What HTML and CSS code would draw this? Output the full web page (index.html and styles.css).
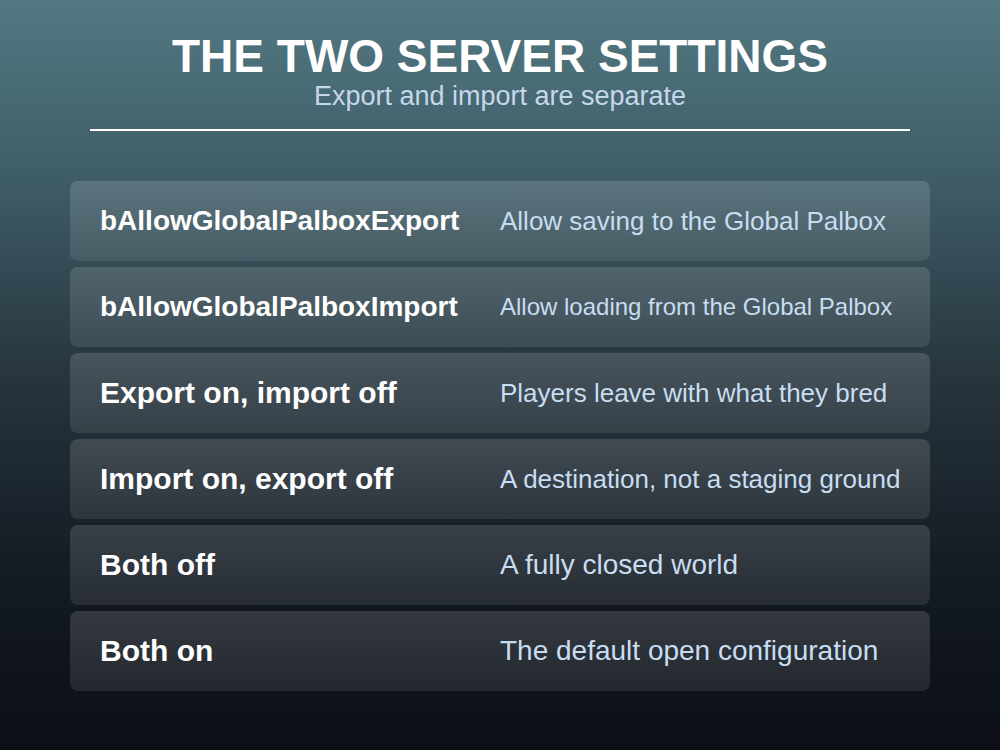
FILE: index.html
```html
<!DOCTYPE html>
<html lang="en">
<head>
<meta charset="utf-8">
<title>The Two Server Settings</title>
<link rel="stylesheet" href="styles.css">
</head>
<body>
<main class="slide">
  <header class="head">
    <h1 class="title">THE TWO SERVER SETTINGS</h1>
    <p class="subtitle">Export and import are separate</p>
    <hr class="rule">
  </header>
  <section class="rows">
    <div class="row"><span class="key k28">bAllowGlobalPalboxExport</span><span class="val v26">Allow saving to the Global Palbox</span></div>
    <div class="row"><span class="key k28">bAllowGlobalPalboxImport</span><span class="val v24">Allow loading from the Global Palbox</span></div>
    <div class="row"><span class="key">Export on, import off</span><span class="val v26">Players leave with what they bred</span></div>
    <div class="row"><span class="key">Import on, export off</span><span class="val v26">A destination, not a staging ground</span></div>
    <div class="row"><span class="key">Both off</span><span class="val">A fully closed world</span></div>
    <div class="row"><span class="key">Both on</span><span class="val">The default open configuration</span></div>
  </section>
</main>
</body>
</html>
```

FILE: styles.css
```css
html, body {
  margin: 0;
  padding: 0;
}
body {
  width: 1000px;
  height: 750px;
  overflow: hidden;
  font-family: "Liberation Sans", Arial, sans-serif;
  background: linear-gradient(180deg, #527982 0%, #3e5b65 25%, #27353e 50%, #151c24 75%, #0b0e15 100%);
}
.slide {
  display: flex;
  flex-direction: column;
  align-items: center;
  width: 1000px;
  height: 750px;
}
.head {
  display: flex;
  flex-direction: column;
  align-items: center;
  width: 820px;
  padding-top: 31px;
}
.title {
  margin: 0;
  font-size: 46px;
  line-height: 50px;
  font-weight: 700;
  color: #ffffff;
}
.subtitle {
  margin: 0;
  font-size: 27px;
  line-height: 30px;
  color: #c6d7ea;
}
.rule {
  width: 820px;
  height: 2px;
  margin: 18px 0 0;
  border: 0;
  background: #ffffff;
}
.rows {
  display: flex;
  flex-direction: column;
  gap: 6px;
  width: 860px;
  margin-top: 50px;
}
.row {
  display: flex;
  align-items: center;
  height: 80px;
  padding: 0 30px;
  border-radius: 8px;
  background: linear-gradient(180deg, rgba(255,255,255,0.14), rgba(255,255,255,0.09));
}
.key {
  width: 400px;
  flex: none;
  font-size: 30px;
  line-height: 34px;
  font-weight: 700;
  color: #ffffff;
}
.key.k28 {
  font-size: 28px;
}
.val {
  font-size: 28px;
  line-height: 34px;
  color: #c8ddf1;
  white-space: nowrap;
}
.val.v26 {
  font-size: 26px;
}
.val.v24 {
  font-size: 24px;
}
```
